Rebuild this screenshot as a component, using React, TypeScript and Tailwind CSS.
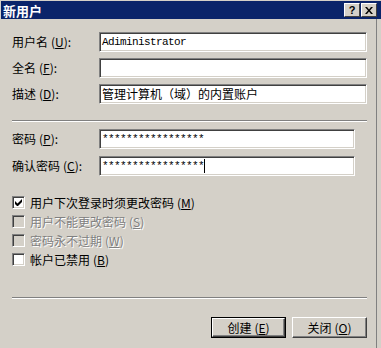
import React from "react";

const sunken =
  "border border-t-[#808080] border-l-[#808080] border-b-white border-r-white shadow-[inset_1px_1px_0_#404040,inset_-1px_-1px_0_#d4d0c8]";

function Mn({ k }: { k: string }) {
  return (
    <span className="ml-[3px]">
      (<span className="underline underline-offset-1">{k}</span>)
    </span>
  );
}

function Field({
  label,
  k,
  value,
  width,
  mono,
  caret,
}: {
  label: string;
  k: string;
  value: string;
  width: string;
  mono?: boolean;
  caret?: boolean;
}) {
  return (
    <div className="flex items-center h-[20px]">
      <div className="w-[87px] shrink-0">
        {label}
        <Mn k={k} />:
      </div>
      <div className={`${sunken} ${width} h-[20px] bg-white flex items-center pl-[2px]`}>
        <span
          className={
            mono
              ? "font-['Liberation_Mono',monospace] text-[11px] tracking-[-0.6px] leading-none"
              : "leading-none"
          }
        >
          {value}
        </span>
        {caret && <span className="w-px h-[14px] bg-black" />}
      </div>
    </div>
  );
}

function Check({
  label,
  k,
  checked,
  disabled,
}: {
  label: string;
  k: string;
  checked?: boolean;
  disabled?: boolean;
}) {
  return (
    <div className="flex items-center h-[19px]">
      <div
        className={`${sunken} w-[13px] h-[13px] flex items-center justify-center ${
          disabled ? "bg-[#d4d0c8]" : "bg-white"
        }`}
      >
        {checked && (
          <svg width="7" height="7" viewBox="0 0 7 7">
            <path d="M0 2v3l2 2h1l4-4V0L2.5 4.5z" fill="#000" />
          </svg>
        )}
      </div>
      <span
        className={`ml-[5px] ${
          disabled ? "text-[#808080] [text-shadow:1px_1px_0_#fff]" : "text-black"
        }`}
      >
        {label}
        <Mn k={k} />
      </span>
    </div>
  );
}

function Button({ label, k, isDefault }: { label: string; k: string; isDefault?: boolean }) {
  return (
    <div className={`w-[75px] h-[21px] ${isDefault ? "border border-black" : ""}`}>
      <div className="w-full h-full flex items-center justify-center border border-t-white border-l-white border-b-[#404040] border-r-[#404040] shadow-[inset_-1px_-1px_0_#808080]">
        {label}
        <Mn k={k} />
      </div>
    </div>
  );
}

function Sep() {
  return (
    <div>
      <div className="h-px bg-[#808080]" />
      <div className="h-px bg-white" />
    </div>
  );
}

export default function App() {
  return (
    <div className="w-[381px] h-[348px] bg-[#d4d0c8] pt-px pl-px text-[12px] text-black font-['Noto_Sans_CJK_SC',sans-serif] leading-none overflow-hidden">
      <div className="h-[18px] bg-[#0a246a] flex items-center justify-between pl-[2px] pr-[4px]">
        <span className="text-white font-bold text-[13px]">新用户</span>
        <div className="flex gap-[1px]">
          <div className="w-[16px] h-[14px] bg-[#d4d0c8] border border-t-white border-l-white border-b-[#404040] border-r-[#404040] flex items-center justify-center font-bold text-[11px] font-['Liberation_Sans',sans-serif]">
            ?
          </div>
          <div className="w-[16px] h-[14px] bg-[#d4d0c8] border border-t-white border-l-white border-b-[#404040] border-r-[#404040] flex items-center justify-center">
            <svg width="8" height="7" viewBox="0 0 8 7">
              <path d="M0 0h2l2 2.5L6 0h2L5 3.5 8 7H6L4 4.5 2 7H0l3-3.5z" fill="#000" />
            </svg>
          </div>
        </div>
      </div>
      <div className="flex h-[329px]">
        <div className="w-[376px] border-r border-[#808080] pl-[11px] pr-[9px] pt-[13px]">
          <div className="flex flex-col gap-[6px]">
            <Field label="用户名" k="U" value="Adiministrator" width="w-[269px]" mono />
            <Field label="全名" k="F" value="" width="w-[269px]" />
            <Field label="描述" k="D" value="管理计算机（域）的内置账户" width="w-[269px]" />
          </div>
          <div className="mt-[16px]">
            <Sep />
          </div>
          <div className="flex flex-col gap-[7px] mt-[7px]">
            <Field label="密码" k="P" value="*****************" width="w-[256px]" mono />
            <Field label="确认密码" k="C" value="*****************" width="w-[256px]" mono caret />
          </div>
          <div className="flex flex-col mt-[17px]">
            <Check label="用户下次登录时须更改密码" k="M" checked />
            <Check label="用户不能更改密码" k="S" disabled />
            <Check label="密码永不过期" k="W" disabled />
            <Check label="帐户已禁用" k="B" />
          </div>
          <div className="mt-[28px]">
            <Sep />
          </div>
          <div className="flex justify-end gap-[6px] mt-[18px]">
            <Button label="创建" k="E" isDefault />
            <Button label="关闭" k="O" />
          </div>
        </div>
      </div>
    </div>
  );
}
